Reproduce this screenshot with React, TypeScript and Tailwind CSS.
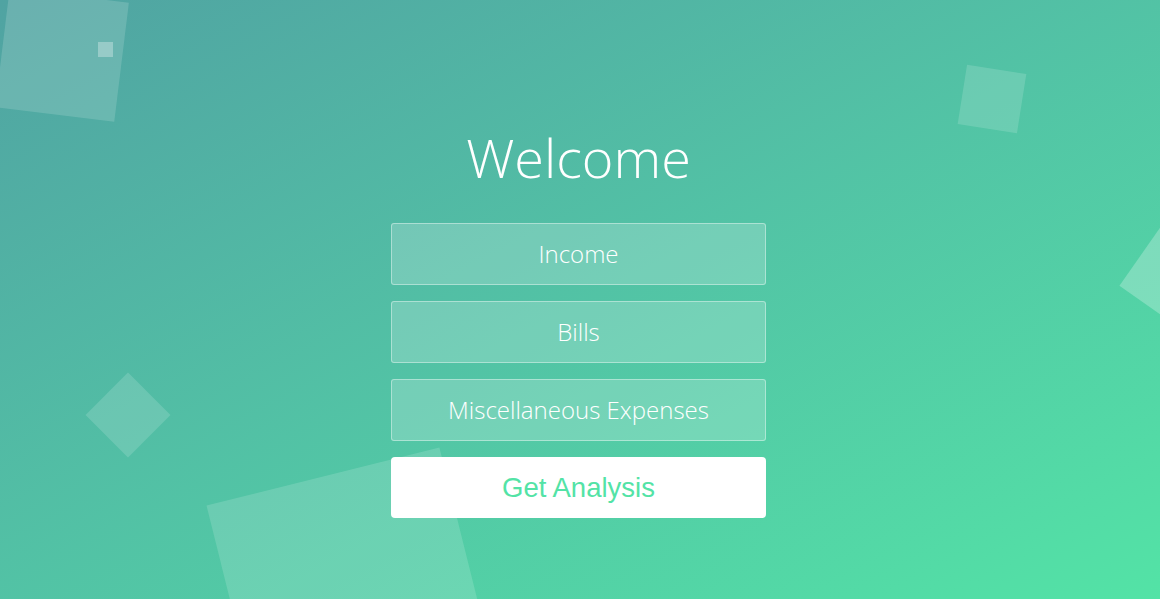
import React from 'react';

const Field: React.FC<{ label: string }> = ({ label }) => (
  <div className="flex h-[62px] w-[375px] items-center justify-center rounded-[3px] border border-white/40 bg-white/20 text-[24px] font-light text-white">
    {label}
  </div>
);

export default function App() {
  return (
    <div
      className="relative h-[599px] w-full overflow-hidden bg-linear-to-br from-[#50a3a2] to-[#53e3a6]"
      style={{ fontFamily: '"Open Sans", "Noto Sans", sans-serif' }}
    >
      {/* floating squares */}
      <div className="absolute left-[2px] top-[-5px] h-[120px] w-[120px] rotate-[7deg] bg-white/15" />
      <div className="absolute left-[98px] top-[42px] h-[15px] w-[15px] bg-white/30" />
      <div className="absolute left-[962px] top-[69px] h-[60px] w-[60px] rotate-[9deg] bg-white/15" />
      <div className="absolute left-[98px] top-[385px] h-[60px] w-[60px] rotate-45 bg-white/15" />
      <div className="absolute left-[1143px] top-[211px] h-[120px] w-[120px] rotate-[-55deg] bg-white/25" />
      <div className="absolute left-[232px] top-[473px] h-[240px] w-[240px] rotate-[-14deg] bg-white/15" />

      <div className="relative flex flex-col items-center pr-[3px] pt-[120px]">
        <h1 className="text-[54px] font-extralight leading-[74px] text-white">Welcome</h1>
        <div className="mt-[29px] flex flex-col gap-4">
          <Field label="Income" />
          <Field label="Bills" />
          <Field label="Miscellaneous Expenses" />
          <button
            className="flex h-[61px] w-[375px] items-center justify-center rounded-[4px] bg-white text-[27.5px] text-[#53e3a6]"
            style={{ fontFamily: '"Liberation Sans", Arial, sans-serif' }}
          >
            Get Analysis
          </button>
        </div>
      </div>
    </div>
  );
}
